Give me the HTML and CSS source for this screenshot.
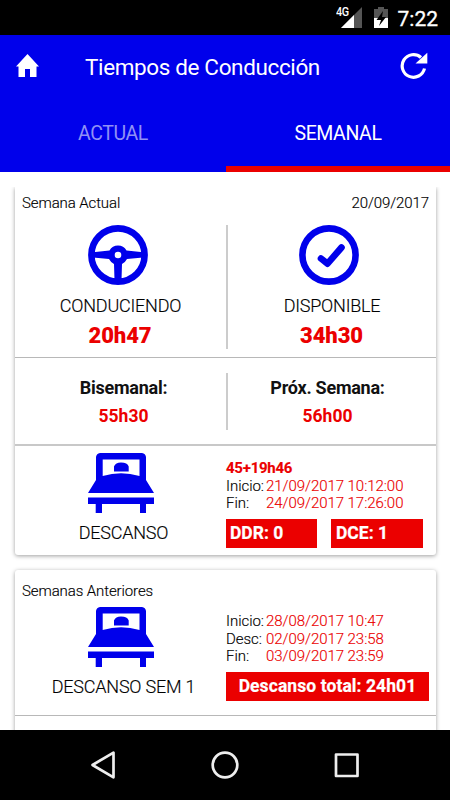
FILE: index.html
```html
<!DOCTYPE html>
<html lang="es">
<head>
<meta charset="utf-8">
<title>Tiempos de Conducción</title>
<link rel="stylesheet" href="styles.css">
</head>
<body>
<svg class="defs" aria-hidden="true">
  <symbol id="bed" viewBox="0 0 66 60">
    <path fill-rule="evenodd" d="M11 0H54Q57.500 0.500 58 4V27L66 40H0L8 27V4Q8.500 .5 12 0ZM14.700 6.500V23Q33 17.500 51.500 23V6.500Z"/>
    <path d="M26 18.500V13.500Q27.500 9.500 33 9.500Q39.500 9.500 40.700 13.500V18.500ZM0 44.500H66V51H58V60H52V51H14V60H7.700V51H0Z"/>
  </symbol>
</svg>
<div class="status">
  <svg class="signal" viewBox="0 0 28 22"><path fill="#555" d="M28 0V21H7Z"/><path fill="#fff" d="M20 8V21H7Z"/></svg>
  <span class="network">4G</span>
  <svg class="battery" viewBox="0 0 14 21"><path fill="#555" d="M4 0H10V2H14V11H0V2H4Z"/><path fill="#fff" d="M0 11H14V21H0Z"/><path d="M9 4L2.500 13H7L5 19L12 10H8Z"/></svg>
  <span class="clock">7:22</span>
</div>
<header>
  <div class="toolbar">
    <svg class="home" viewBox="0 0 24 24"><path d="M12.500 0L1 12.500H3.500V23H10V15H15V23H21.500V12.500H24Z"/></svg>
    <h1>Tiempos de Conducción</h1>
    <svg class="refresh" viewBox="0 0 28 28"><path class="arc" d="M24.500 16.500A11.300 11.300 0 1 1 21 5.500"/><path class="tip" d="M27.300 .8V11.500H15.500Z"/></svg>
  </div>
  <nav><span>ACTUAL</span><span class="active">SEMANAL</span></nav>
</header>
<main>
  <section class="card current">
    <div class="heading"><span>Semana Actual</span><span>20/09/2017</span></div>
    <div class="pair summary">
      <div>
        <svg class="round" viewBox="0 0 60 60"><circle class="ring" cx="30" cy="30" r="26.600"/><path fill-rule="evenodd" d="M5 27.200L21.500 25.500A9.700 9.700 0 0 1 38.500 25.500L55 27.200V32.500L39 34Q37.500 37 34 39L33.500 55H26.500L26 39Q22.500 37 21 34L5 32.500ZM30 26.700A3.300 3.300 0 1 0 30 33.300A3.300 3.300 0 1 0 30 26.700Z"/></svg>
        <span class="label">CONDUCIENDO</span><b class="big">20h47</b>
      </div>
      <div>
        <svg class="round" viewBox="0 0 60 60"><circle class="ring" cx="30" cy="30" r="26.600"/><path class="tick" d="M22 33.500L28.500 38.700L42.500 22.500"/></svg>
        <span class="label">DISPONIBLE</span><b class="big">34h30</b>
      </div>
    </div>
    <div class="pair totals">
      <div><b>Bisemanal:</b><b class="red">55h30</b></div>
      <div><b>Próx. Semana:</b><b class="red">56h00</b></div>
    </div>
    <div class="rest">
      <div class="kind"><svg class="bed"><use href="#bed"/></svg><span class="label">DESCANSO</span></div>
      <div class="info">
        <b class="sum">45+19h46</b>
        <dl><dt>Inicio:</dt><dd>21/09/2017 10:12:00</dd><dt>Fin:</dt><dd>24/09/2017 17:26:00</dd></dl>
        <div class="tags"><b>DDR: 0</b><b>DCE: 1</b></div>
      </div>
    </div>
  </section>
  <section class="card previous">
    <div class="heading"><span>Semanas Anteriores</span></div>
    <div class="rest">
      <div class="kind"><svg class="bed"><use href="#bed"/></svg><span class="label">DESCANSO SEM 1</span></div>
      <div class="info">
        <dl><dt>Inicio:</dt><dd>28/08/2017 10:47</dd><dt>Desc:</dt><dd>02/09/2017 23:58</dd><dt>Fin:</dt><dd>03/09/2017 23:59</dd></dl>
        <div class="tags total"><b>Descanso total: 24h01</b></div>
      </div>
    </div>
  </section>
</main>
<footer>
  <svg viewBox="0 0 30 30"><path d="M25.500 2.700V27.300L4.500 15Z"/></svg>
  <svg viewBox="0 0 30 30"><circle cx="15" cy="15" r="12.300"/></svg>
  <svg viewBox="0 0 30 30"><path d="M4 4.500H25.500V26H4Z"/></svg>
</footer>
</body>
</html>
```

FILE: styles.css
```css
* { box-sizing: border-box; }
body { margin: 0; width: 450px; height: 800px; display: flex; flex-direction: column; overflow: hidden; background: #fff; color: #111; font-family: Roboto, sans-serif; }
svg { display: block; flex: none; }
.defs { position: absolute; width: 0; height: 0; }
.status { height: 35px; flex: none; background: #000; color: #fff; display: flex; align-items: center; justify-content: flex-end; padding-right: 12px; position: relative; }
.signal { width: 28px; height: 22px; margin-right: 12px; }
.network { position: absolute; left: 336px; top: 6px; font: 500 12px/13px Roboto, sans-serif; letter-spacing: -.5px; transform: scaleX(.9); transform-origin: left; }
.battery { width: 14px; height: 21px; margin-right: 10px; }
.clock { font-size: 21px; line-height: 34px; padding-top: 3px; -webkit-text-stroke: .3px #fff; }
header { height: 137px; flex: none; background: #0000eb; color: #fff; display: flex; flex-direction: column; }
.toolbar { height: 62px; display: flex; align-items: center; padding: 0 22px 0 15px; }
.home { width: 24px; height: 24px; fill: #fff; }
h1 { flex: 1; margin: 0 0 0 46px; font-size: 22.500px; font-weight: 400; line-height: 28px; padding-top: 1px; white-space: nowrap; letter-spacing: -.37px; }
.refresh { width: 28px; height: 28px; }
.arc { fill: none; stroke: #fff; stroke-width: 3.2; }
.tip { fill: #fff; }
nav { flex: 1; display: flex; font-size: 19.500px; letter-spacing: -.4px; }
nav span { flex: 1; display: flex; align-items: center; justify-content: center; color: #9090f5; padding-top: 4px; border-bottom: 6px solid transparent; }
nav .active { flex: 0 0 224px; color: #fff; border-color: #eb0000; }
main { flex: 1; min-height: 0; margin-top: 15px; padding: 0 14px 0 15px; overflow: hidden; }
.card { background: #fff; border-radius: 3px; box-shadow: 0 1px 4px rgba(0,0,0,.38); }
.current { height: 368px; border-radius: 0 0 3px 3px; }
.previous { height: 240px; margin-top: 15px; }
.heading { display: flex; justify-content: space-between; padding: 7px 7px 0; font-size: 15px; line-height: 18px; font-weight: 300; color: #000; letter-spacing: -.1px; -webkit-text-stroke: .15px; }
.pair { display: flex; border-bottom: 1px solid #b8b8b8; }
.pair > div { flex: 1; display: flex; flex-direction: column; align-items: center; }
.pair > div:first-child { flex: 0 0 213px; border-right: 2px solid #ccc; }
.summary { height: 146px; padding: 13px 0 8px; }
.totals { height: 88px; padding: 15px 0 14px; border-bottom: 2px solid #c8c8c8; font-size: 18px; line-height: 28px; letter-spacing: -.25px; }
.totals > div { padding-top: 1px; }
.totals > div:first-child { padding-left: 6px; }
.totals > div:last-child { padding-right: 9px; }
.round { width: 60px; height: 60px; margin-right: 6px; fill: #0000eb; }
.ring { fill: none; stroke: #0000eb; stroke-width: 6.600; }
.tick { fill: none; stroke: #0000eb; stroke-width: 6.600; stroke-linecap: round; stroke-linejoin: round; }
.label { font-size: 18px; line-height: 22px; margin-top: 10px; font-weight: 300; color: #000; white-space: nowrap; letter-spacing: -.22px; -webkit-text-stroke: .15px; }
.big { color: #eb0000; font-size: 22px; line-height: 26px; margin: 6px 1px 0 0; font-weight: 900; letter-spacing: -.1px; }
.red { color: #eb0000; font-size: 17.500px; letter-spacing: 0; }
.rest { display: flex; }
.kind { width: 211px; display: flex; flex-direction: column; align-items: center; padding: 7px 0 0 6px; }
.bed { width: 66px; height: 60px; fill: #0000eb; margin-right: 6px; }
.kind .label { margin-top: 9px; }
.info { flex: 1; padding: 14px 7px 0 0; font-size: 15px; line-height: 17.600px; font-weight: 300; letter-spacing: -.05px; -webkit-text-stroke: .15px; }
.sum { display: block; color: #eb0000; font-weight: 700; letter-spacing: -.25px; }
dl { margin: 0; display: grid; grid-template-columns: 40px 1fr; white-space: nowrap; color: #000; }
dd { margin: 0; color: #eb0000; }
.tags { margin-top: 6px; display: grid; grid-template-columns: 91px 92px; gap: 14px; font-size: 17.500px; line-height: 29px; color: #fff; letter-spacing: 0; -webkit-text-stroke: .2px; }
.tags b { background: #eb0000; padding-left: 4px; font-weight: 700; }
.tags b + b { padding-left: 5px; }
.total { grid-template-columns: 1fr; text-align: center; letter-spacing: .08px; }
.total b { padding: 0; }
.previous .heading { padding-top: 12px; }
.previous .rest { height: 116px; border-bottom: 1px solid #b8b8b8; }
.previous .info { padding-top: 13px; }
footer { height: 70px; flex: none; background: #000; display: flex; justify-content: center; align-items: center; gap: 92px; }
footer svg { width: 30px; height: 30px; fill: none; stroke: #eee; stroke-width: 2.700; stroke-linejoin: round; }
```
